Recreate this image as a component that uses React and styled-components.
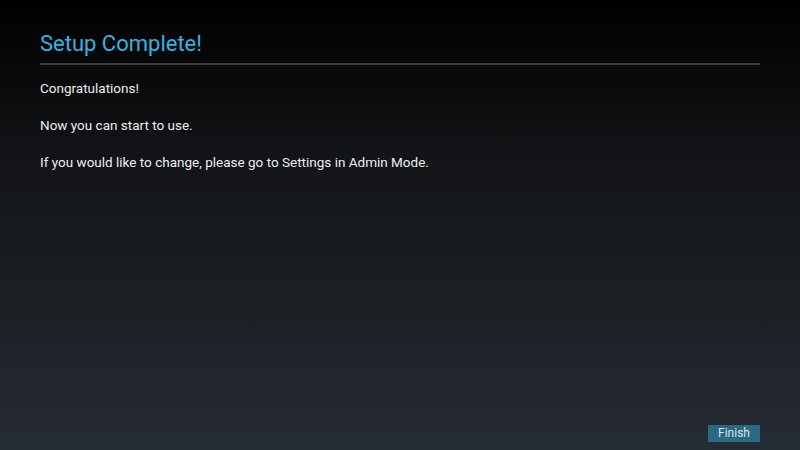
import React from "react";
import styled, { createGlobalStyle } from "styled-components";

const GlobalStyle = createGlobalStyle`
    html, body {
        margin : 0;
        padding : 0;
    }
    body {
        font-family : Roboto, "Liberation Sans", sans-serif;
    }
`;

const Screen = styled.div`
    width : 800px;
    height : 450px;
    box-sizing : border-box;
    padding : 31px 40px 8px 40px;
    display : flex;
    flex-direction : column;
    background : linear-gradient(to bottom, #000000 0%, #121417 35%, #262c33 100%);
    overflow : hidden;
`;

const Title = styled.h1`
    margin : 0;
    padding : 0 0 6px 0;
    font-size : 22px;
    font-weight : 400;
    line-height : 26px;
    color : #33b5e5;
    border-bottom : 2px solid #3d3d3f;
`;

const Body = styled.div`
    flex : 1;
    display : flex;
    flex-direction : column;
    gap : 20px;
    padding-top : 15px;
`;

const Line = styled.p`
    margin : 0;
    font-size : 13.5px;
    font-weight : 400;
    line-height : 17px;
    color : #ededed;
`;

const Footer = styled.div`
    display : flex;
    justify-content : flex-end;
`;

const Button = styled.button`
    width : 52px;
    height : 17px;
    padding : 0;
    border : none;
    background : #2a6883;
    color : #d8e4ea;
    font-family : Roboto, "Liberation Sans", sans-serif;
    font-size : 12px;
    font-weight : 400;
    line-height : 17px;
`;

const lines = [
    "Congratulations!",
    "Now you can start to use.",
    "If you would like to change, please go to Settings in Admin Mode.",
];

function App() {
    return (
        <>
            <GlobalStyle />
            <Screen>
                <Title>Setup Complete!</Title>
                <Body>
                    {lines.map((text) => (
                        <Line key={text}>{text}</Line>
                    ))}
                </Body>
                <Footer>
                    <Button>Finish</Button>
                </Footer>
            </Screen>
        </>
    );
}

export default App;
